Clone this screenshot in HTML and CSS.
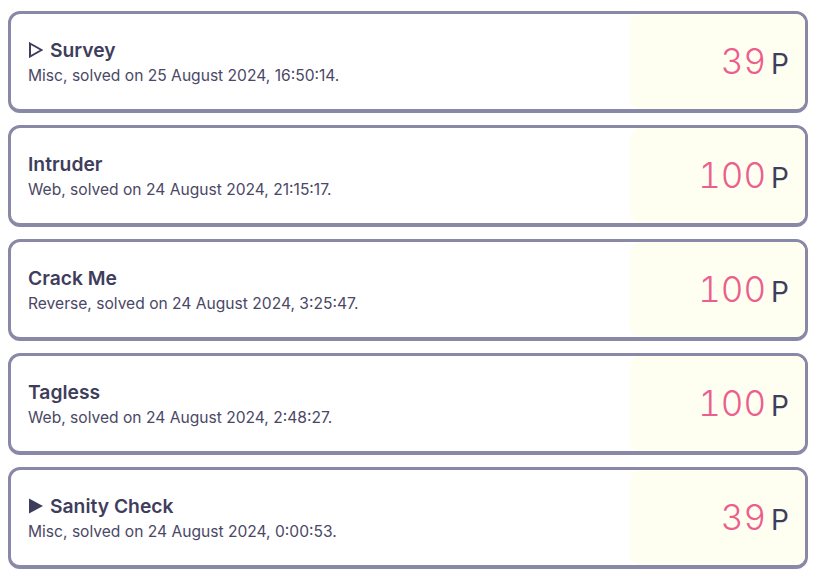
FILE: index.html
```html
<!DOCTYPE html>
<html>
<head>
<meta charset="utf-8">
<link rel="stylesheet" href="styles.css">
</head>
<body>
<div class="list">
  <div class="card">
    <div class="info">
      <div class="title"><svg class="icon" viewBox="0 0 15 16" width="15" height="16"><path d="M2 1.5 L13.6 8 L2 14.5 Z" fill="none" stroke="#3f3d5c" stroke-width="2" stroke-linejoin="miter"/></svg>Survey</div>
      <div class="sub">Misc, solved on 25 August 2024, 16:50:14.</div>
    </div>
    <div class="points"><div class="val"><span class="num">39</span><span class="unit">P</span></div></div>
  </div>
  <div class="card">
    <div class="info">
      <div class="title">Intruder</div>
      <div class="sub">Web, solved on 24 August 2024, 21:15:17.</div>
    </div>
    <div class="points"><div class="val"><span class="num">100</span><span class="unit">P</span></div></div>
  </div>
  <div class="card">
    <div class="info">
      <div class="title">Crack Me</div>
      <div class="sub">Reverse, solved on 24 August 2024, 3:25:47.</div>
    </div>
    <div class="points"><div class="val"><span class="num">100</span><span class="unit">P</span></div></div>
  </div>
  <div class="card">
    <div class="info">
      <div class="title">Tagless</div>
      <div class="sub">Web, solved on 24 August 2024, 2:48:27.</div>
    </div>
    <div class="points"><div class="val"><span class="num">100</span><span class="unit">P</span></div></div>
  </div>
  <div class="card">
    <div class="info">
      <div class="title"><svg class="icon" viewBox="0 0 15 16" width="15" height="16"><path d="M1 0.5 L15 8 L1 15.5 Z" fill="#3f3d5c"/></svg>Sanity Check</div>
      <div class="sub">Misc, solved on 24 August 2024, 0:00:53.</div>
    </div>
    <div class="points"><div class="val"><span class="num">39</span><span class="unit">P</span></div></div>
  </div>
</div>
</body>
</html>
```
FILE: styles.css
```css
body {
  margin: 0;
  padding: 11px 8px 0 8px;
  font-family: Inter, "Noto Sans", sans-serif;
  background: #ffffff;
  color: #3f3d5c;
}
.list {
  width: 800px;
  display: flex;
  flex-direction: column;
  gap: 12px;
}
.card {
  display: flex;
  border: 3px solid #8a88a7;
  border-bottom-width: 4px;
  border-radius: 12px;
  background: #fff;
}
.info {
  flex: 1;
  padding: 22px 17px 0 17px;
}
.title {
  display: flex;
  align-items: center;
  gap: 7px;
  font-size: 19.3px;
  font-weight: 600;
  line-height: 28px;
  color: #3f3d5c;
}
.icon {
  display: block;
}
.sub {
  font-size: 15.6px;
  line-height: 24px;
  color: #4a4866;
}
.points {
  width: 175px;
  height: 95px;
  box-sizing: border-box;
  background: #fefff0;
  border-radius: 10px 9px 9px 10px;
  display: flex;
  align-items: center;
  justify-content: flex-end;
  padding: 0 16px 0 0;
}
.val {
  display: flex;
  align-items: baseline;
  line-height: 40px;
  margin-top: 1px;
}
.num {
  font-size: 35px;
  font-weight: 300;
  font-variant-numeric: tabular-nums;
  color: #ec5e8e;
}
.unit {
  font-size: 28px;
  font-weight: 400;
  color: #3f3d5c;
  margin-left: 5px;
}
```
